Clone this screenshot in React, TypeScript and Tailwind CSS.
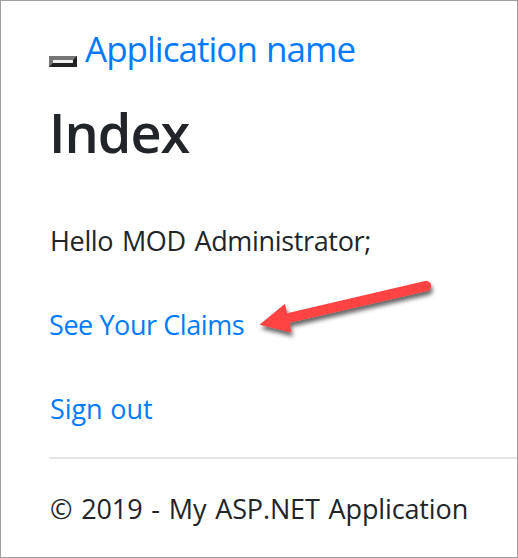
function ClaimsArrow() {
  return (
    <svg aria-hidden="true" className="absolute top-[264px] left-[244px]" width="204" height="86" viewBox="245 265 204 86">
      <defs>
        <filter id="arrow-shadow" x="-10%" y="-25%" width="120%" height="170%">
          <feDropShadow dx="1.5" dy="4" stdDeviation="2.2" floodColor="#000" floodOpacity="0.6" />
        </filter>
      </defs>
      <g filter="url(#arrow-shadow)" fill="#ff4242">
        <path d="M259.5 324.8 L285 303.7 L287 313.3 L425 281 A5 5 0 0 1 427.2 290.9 L289.5 322.8 L291.5 332.5 Z" />
      </g>
    </svg>
  );
}

export default function App() {
  return (
    <main className="relative h-[558px] w-[518px] overflow-hidden border border-[#a0a0a0] bg-white pl-[48px] font-['Open_Sans',sans-serif] text-[27px] font-normal text-[#212529]">
      <header className="flex h-[84px] items-start pt-[24px]">
        <button aria-label="Toggle navigation" className="mt-[31px] mr-[8px] h-[11px] w-[28px] border-4 border-t-[#767676] border-r-[#212121] border-b-[#212121] border-l-[#767676] bg-[#efefef]" />
        <a className="text-[35px] leading-[48px] tracking-[-0.98px] [word-spacing:1px] whitespace-nowrap text-[#007bff]">Application name</a>
      </header>
      <h1 className="h-[132px] text-[54px] leading-[94px] font-semibold tracking-[-1px]">Index</h1>
      <p className="h-[84px] pl-px leading-[48px] tracking-[-0.34px] [word-spacing:2px] whitespace-nowrap">Hello MOD Administrator;</p>
      <p className="h-[84px] leading-[48px] tracking-[-0.43px] whitespace-nowrap"><a className="text-[#007bff]">See Your Claims</a></p>
      <p className="h-[72px] pl-px leading-[48px] tracking-[-0.1px] [word-spacing:1px] whitespace-nowrap"><a className="text-[#007bff]">Sign out</a></p>
      <hr className="border-t-2 border-[#e5e5e5]" />
      <footer className="pt-[26px] pl-px leading-[48px] tracking-[-0.13px] [word-spacing:2px] whitespace-nowrap">© 2019 - My ASP.NET Application</footer>
      <ClaimsArrow />
    </main>
  );
}
